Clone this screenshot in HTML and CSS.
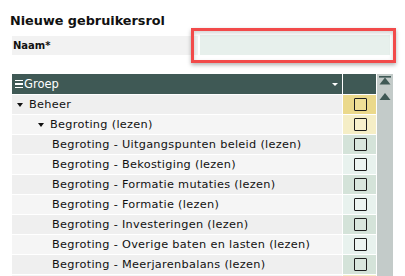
FILE: index.html
```html
<!DOCTYPE html>
<html lang="nl">
<head>
    <meta charset="UTF-8">
    <title>Nieuwe gebruikersrol</title>
    <link rel="stylesheet" href="styles.css">
</head>
<body>
<div class="page">
    <h1 class="title">Nieuwe gebruikersrol</h1>

    <div class="form-row">
        <label class="form-label" for="naam">Naam*</label>
        <input class="form-input" type="text" id="naam">
        <div class="highlight"></div>
    </div>

    <div class="grid-wrap">
        <div class="grid">
            <div class="head head-group">
                <span class="menu-icon"><i></i><i></i><i></i></span>Groep
                <span class="sort-caret"></span>
            </div>
            <div class="head"></div>

            <div class="cell lvl0 odd"><span class="caret"></span>Beheer</div>
            <div class="check c-yellow"><span class="box"></span></div>

            <div class="cell lvl1 even"><span class="caret"></span>Begroting (lezen)</div>
            <div class="check c-lyellow"><span class="box"></span></div>

            <div class="cell lvl2 odd">Begroting - Uitgangspunten beleid (lezen)</div>
            <div class="check c-green"><span class="box"></span></div>

            <div class="cell lvl2 even">Begroting - Bekostiging (lezen)</div>
            <div class="check c-lgreen"><span class="box"></span></div>

            <div class="cell lvl2 odd">Begroting - Formatie mutaties (lezen)</div>
            <div class="check c-green"><span class="box"></span></div>

            <div class="cell lvl2 even">Begroting - Formatie (lezen)</div>
            <div class="check c-lgreen"><span class="box"></span></div>

            <div class="cell lvl2 odd">Begroting - Investeringen (lezen)</div>
            <div class="check c-green"><span class="box"></span></div>

            <div class="cell lvl2 even">Begroting - Overige baten en lasten (lezen)</div>
            <div class="check c-lgreen"><span class="box"></span></div>

            <div class="cell lvl2 odd">Begroting - Meerjarenbalans (lezen)</div>
            <div class="check c-green"><span class="box"></span></div>

            <div class="cell even"></div>
            <div class="check c-lyellow"></div>
        </div>

        <div class="scrollbar">
            <svg width="12" height="9" viewBox="0 0 12 9"><rect x="0" y="0" width="12" height="1.6" fill="#3f5955"/><polygon points="6,1.5 11.5,8.5 0.5,8.5" fill="#3f5955"/></svg>
            <svg class="up" width="12" height="7" viewBox="0 0 12 7"><polygon points="6,0 11.5,7 0.5,7" fill="#3f5955"/></svg>
        </div>
    </div>
</div>
</body>
</html>
```

FILE: styles.css
```css
body {
    margin: 0;
    font-family: "DejaVu Sans", Arial, sans-serif;
    color: #111;
    background-color: #fff;
    overflow: hidden;
}

.page {
    padding: 12px 0 0 10px;
}

.title {
    margin: 0 0 5px 0;
    font-size: 12.8px;
    font-weight: 700;
    line-height: 18px;
}

.form-row {
    position: relative;
    display: flex;
    align-items: flex-end;
    gap: 2px;
    margin-left: 2px;
    height: 20px;
}

.form-label {
    width: 186px;
    height: 19px;
    line-height: 19px;
    padding-left: 1px;
    box-sizing: border-box;
    background-color: #f2f2f2;
    font-size: 10px;
    font-weight: 700;
}

.form-input {
    width: 190px;
    height: 20px;
    border: none;
    padding: 0;
    background-color: #e7f0ec;
}

.highlight {
    position: absolute;
    left: 179px;
    top: -7px;
    width: 205px;
    height: 35px;
    box-sizing: border-box;
    border: 3px solid #f24a4a;
    box-shadow: 0 2px 4px rgba(0, 0, 0, 0.3), inset 0 2px 4px rgba(0, 0, 0, 0.18);
}

.grid-wrap {
    display: flex;
    gap: 1px;
    height: 202px;
    overflow: hidden;
    margin-top: 19px;
    margin-left: 2px;
}

.grid {
    display: grid;
    grid-template-columns: 330px 33px;
    grid-template-rows: 20px;
    grid-auto-rows: 19px;
    gap: 1px;
    background-color: #fff;
    width: 364px;
}

.head {
    background-color: #3f5955;
}

.head-group {
    position: relative;
    display: flex;
    align-items: center;
    color: #fff;
    font-size: 11.5px;
    padding-left: 3px;
}

.menu-icon {
    display: flex;
    flex-direction: column;
    gap: 2px;
    width: 8px;
    margin-right: 1px;
}

.menu-icon i {
    display: block;
    height: 1.5px;
    background-color: #fff;
}

.sort-caret {
    position: absolute;
    right: 4px;
    top: 9px;
    border-left: 3px solid transparent;
    border-right: 3px solid transparent;
    border-top: 3px solid #fff;
}

.cell {
    display: flex;
    align-items: center;
    font-size: 11.3px;
    letter-spacing: 0.3px;
    white-space: nowrap;
}

.odd { background-color: #efefef; }
.even { background-color: #f5f5f5; }

.lvl0 { padding-left: 5px; }
.lvl1 { padding-left: 26px; }
.lvl2 { padding-left: 40px; }

.caret {
    width: 0;
    height: 0;
    border-left: 3px solid transparent;
    border-right: 3px solid transparent;
    border-top: 4px solid #111;
    margin-right: 6px;
}

.check {
    display: flex;
    align-items: center;
    justify-content: center;
}

.box {
    width: 13px;
    height: 13px;
    box-sizing: border-box;
    border: 1.5px solid #1d1d1d;
    border-radius: 1px;
    margin-left: 1px;
}

.c-yellow { background-color: #ebd98b; }
.c-lyellow { background-color: #f5eec6; }
.c-green { background-color: #d4e3d9; }
.c-lgreen { background-color: #e8f2ee; }

.c-yellow .box { background-color: #efdf97; }
.c-lyellow .box { background-color: #f7f0cc; }
.c-green .box { background-color: #d9e6dd; }
.c-lgreen .box { background-color: #ecf4f1; }

.scrollbar {
    width: 16px;
    height: 202px;
    background-color: #c3cbc9;
    display: flex;
    flex-direction: column;
    align-items: center;
    padding-top: 2px;
    box-sizing: border-box;
}

.scrollbar .up {
    margin-top: 8px;
}
```
